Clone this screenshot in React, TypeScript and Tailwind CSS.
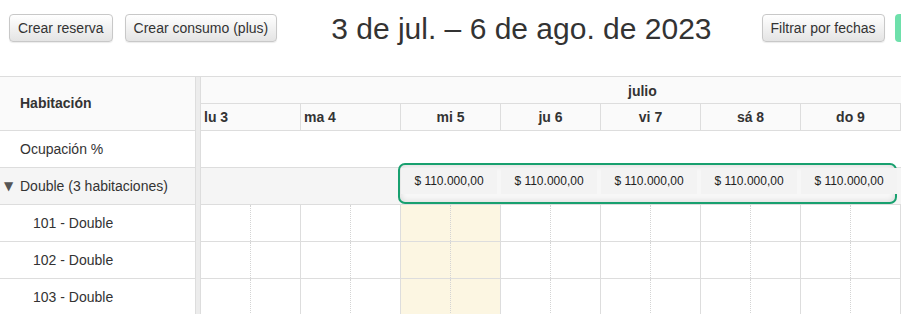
import React from "react";

const days = [
  { label: "lu 3", align: "left" },
  { label: "ma 4", align: "left" },
  { label: "mi 5", align: "center" },
  { label: "ju 6", align: "center" },
  { label: "vi 7", align: "center" },
  { label: "sá 8", align: "center" },
  { label: "do 9", align: "center" },
];

const rooms = ["101 - Double", "102 - Double", "103 - Double"];

function Btn({ children }: { children: React.ReactNode }) {
  return (
    <button className="h-[28px] shrink-0 whitespace-nowrap rounded-[4px] border border-[#c8c8c8] bg-gradient-to-b from-white to-[#e4e4e4] px-[8px] text-[14px] leading-none text-[#333] shadow-[0_1px_1px_rgba(0,0,0,0.08)]">
      {children}
    </button>
  );
}

export default function App() {
  return (
    <div className="h-[314px] w-[901px] overflow-hidden bg-white font-['Liberation_Sans',Arial,sans-serif] text-[#333]">
      {/* toolbar */}
      <div className="flex h-[76px] w-max items-start pl-[9px] pt-[14px]">
        <Btn>Crear reserva</Btn>
        <div className="ml-[12px] shrink-0">
          <Btn>Crear consumo (plus)</Btn>
        </div>
        <h2 className="ml-[54px] mt-[-1px] shrink-0 whitespace-nowrap text-[30px] leading-[32px]">
          3 de jul. – 6 de ago. de 2023
        </h2>
        <div className="ml-[50px] shrink-0">
          <Btn>Filtrar por fechas</Btn>
        </div>
        <div className="ml-[10px] h-[28px] w-[20px] shrink-0 rounded-[4px] bg-[#6ee0ab]" />
      </div>

      {/* timeline */}
      <div className="relative flex border-t border-[#ddd]">
        {/* resource column */}
        <div className="w-[196px] shrink-0 border-r border-[#ddd] text-[14px]">
          <div className="flex h-[54px] items-center border-b border-[#ddd] bg-[#fafafa] pl-[20px] font-bold">
            Habitación
          </div>
          <div className="flex h-[37px] items-center border-b border-[#ddd] pl-[20px]">
            Ocupación %
          </div>
          <div className="flex h-[37px] items-center border-b border-[#ddd] bg-[#f5f5f5] pl-[4px]">
            <span className="mr-[4px] w-[12px] font-['DejaVu_Sans',sans-serif] text-[12px] text-[#555]">▼</span>
            Double (3 habitaciones)
          </div>
          {rooms.map((r) => (
            <div key={r} className="flex h-[37px] items-center border-b border-[#ddd] pl-[33px]">
              {r}
            </div>
          ))}
        </div>

        {/* divider */}
        <div className="w-[4px] shrink-0 bg-[#ececec]" />

        {/* grid */}
        <div className="flex-1 border-l border-[#ddd] text-[14px]">
          <div className="h-[27px] border-b border-[#ddd] bg-[#fafafa] pl-[427px] pt-[6px] font-bold leading-[16px]">
            julio
          </div>
          <div className="flex h-[27px] border-b border-[#ddd] bg-[#fafafa] font-bold">
            {days.map((d) => (
              <div
                key={d.label}
                className={`flex w-[100px] shrink-0 items-center border-r border-[#ddd] ${
                  d.align === "left" ? "justify-start pl-[3px]" : "justify-center"
                }`}
              >
                {d.label}
              </div>
            ))}
          </div>
          <div className="h-[37px] border-b border-[#ddd]" />
          <div className="h-[37px] border-b border-[#ddd] bg-[#f5f5f5]" />
          {rooms.map((r) => (
            <div key={r} className="flex h-[37px] border-b border-[#ddd]">
              {days.map((d, i) => (
                <div
                  key={d.label}
                  className={`flex w-[100px] shrink-0 border-r border-[#ddd] ${
                    i === 2 ? "bg-[#fcf6e2]" : ""
                  }`}
                >
                  <div className="w-[50px] border-r border-dotted border-[#d4d4d4]" />
                  <div className="w-[49px]" />
                </div>
              ))}
            </div>
          ))}
        </div>

        {/* selected rate overlay */}
        <div className="absolute left-[398px] top-[86px] flex h-[41px] w-[499px] rounded-[7px] border-2 border-[#18a06f] bg-[#f7f7f7] pl-[1px] pt-[3px] shadow-[inset_0_0_6px_rgba(0,0,0,0.14)]">
          {[0, 1, 2, 3, 4].map((i) => (
            <div
              key={i}
              className="mr-[4px] flex h-[26px] w-[96px] shrink-0 items-center justify-center bg-[#f3f3f3] text-[12px] text-[#222]"
            >
              $ 110.000,00
            </div>
          ))}
        </div>
      </div>
    </div>
  );
}
